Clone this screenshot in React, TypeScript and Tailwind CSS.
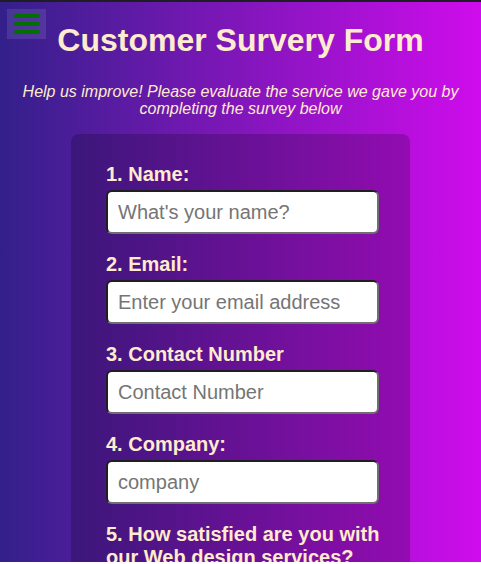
import React from "react";

const fields = [
  { label: "1. Name:", placeholder: "What's your name?" },
  { label: "2. Email:", placeholder: "Enter your email address" },
  { label: "3. Contact Number", placeholder: "Contact Number" },
  { label: "4. Company:", placeholder: "company" },
];

export default function App() {
  return (
    <div className="h-[564px] w-full overflow-hidden bg-white font-['Liberation_Sans',Arial,sans-serif]">
      <div className="relative h-[562px] overflow-hidden border-t-2 border-[#1f1d24] bg-[linear-gradient(to_right,#33208a,#cf0cec)]">
        <button
          type="button"
          className="absolute left-[7px] top-[7px] flex h-[30px] w-[39px] flex-col items-center justify-center gap-[4px] bg-white/10"
        >
          <span className="block h-[4px] w-[26px] rounded-full bg-[#007000]" />
          <span className="block h-[4px] w-[26px] rounded-full bg-[#007000]" />
          <span className="block h-[4px] w-[26px] rounded-full bg-[#007000]" />
        </button>
        <h1 className="pt-[20px] text-center text-[32px] font-bold leading-[37px] text-[#ffebcd]">
          Customer Survery Form
        </h1>
        <p className="mx-auto mt-[24px] px-[10px] text-center text-[16px] italic leading-[17px] text-[#ffebcd]">
          Help us improve! Please evaluate the service we gave you by
          <br />
          completing the survey below
        </p>
        <form className="mx-auto mt-[17px] w-[339px] rounded-[8px] bg-black/20 pl-[35px] pr-[31px] pt-[29px] pb-[30px]">
          {fields.map((f) => (
            <div key={f.label} className="mb-[19px]">
              <label className="block text-[20px] font-bold leading-[23px] text-[#ffebcd]">
                {f.label}
              </label>
              <input
                type="text"
                placeholder={f.placeholder}
                className="mt-[4px] block h-[44px] w-[273px] rounded-[6px] border-2 border-b-[#6f6f6f] border-l-[#1f1f1f] border-r-[#6f6f6f] border-t-[#1f1f1f] bg-white px-[10px] text-[20px] text-black outline-none placeholder:text-[#757575]"
              />
            </div>
          ))}
          <div>
            <label className="block w-[280px] text-[20px] font-bold leading-[23px] text-[#ffebcd]">
              5. How satisfied are you with our Web design services?
            </label>
          </div>
        </form>
      </div>
    </div>
  );
}
